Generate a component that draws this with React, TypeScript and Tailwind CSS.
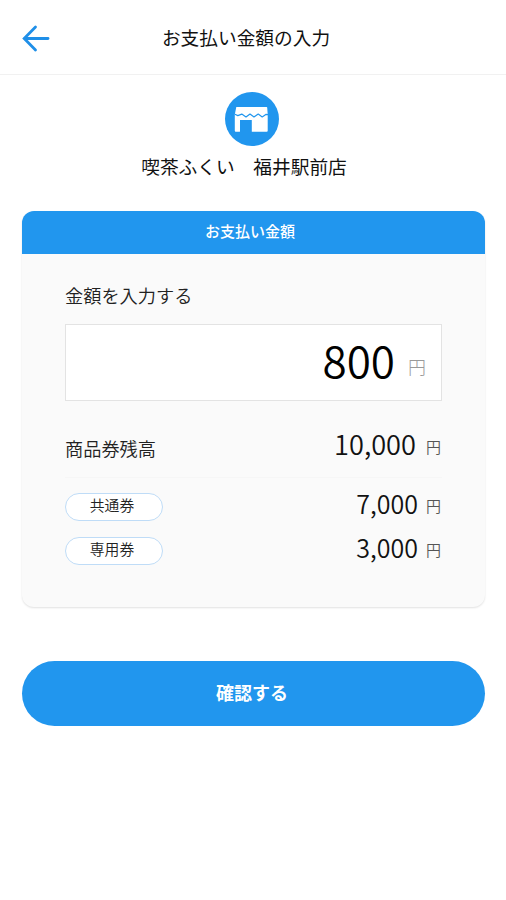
import React, { useState } from 'react';

type Voucher = {
  id: number;
  name: string;
  balance: number;
};

const vouchers: Voucher[] = [
  { id: 1, name: '共通券', balance: 7000 },
  { id: 2, name: '専用券', balance: 3000 },
];

const BackIcon = () => (
  <svg width="28" height="28" viewBox="0 0 28 28" fill="none" stroke="#1f8fe8" strokeWidth="2.8" strokeLinecap="round">
    <path d="M26 14.500H3" />
    <path d="M13.500 3L2.200 14.500 13.500 26" />
  </svg>
);

const ShopIcon = () => (
  <svg width="54" height="54" viewBox="0 0 54 54" fill="none">
    <circle cx="27" cy="27" r="27" fill="#2196ee" />
    <path
      d="M11.300 15H41.600q.5 0 .6.6l.5 7v16.200q0 1-1 1H26.800V28H15v11.200q0 .6-.6.6h-3.700q-.9 0-.9-1V22.600z"
      fill="#fff"
    />
    <path
      d="M10 22.300l2.800 1.300 4-1.500 4.200 2.800 4-2.800 4 2.800 4.200-2.800 4 2.800 3.600-2.500 2.500.2"
      stroke="#2196ee"
      strokeWidth="1.200"
      strokeLinejoin="round"
    />
  </svg>
);

const App = () => {
  const [amount, setAmount] = useState('800');

  const total = vouchers.reduce((sum, voucher) => sum + voucher.balance, 0);

  return (
    <div className="min-h-screen bg-white font-['Noto_Sans_CJK_JP',sans-serif] text-[#111]">
      <header className="flex h-[75px] items-center border-b border-[#f1f1f1] px-[22px]">
        <button className="mt-0.5 w-7" aria-label="戻る">
          <BackIcon />
        </button>
        <h1 className="mr-7 flex-1 pb-px pr-3.5 text-center text-[18.700px] leading-7">お支払い金額の入力</h1>
      </header>

      <div className="flex flex-col items-center pr-[3px] pt-[17px]">
        <ShopIcon />
        <p className="mr-[15px] mt-1.5 text-[18.700px] leading-7">喫茶ふくい　福井駅前店</p>
      </div>

      <section className="ml-[22px] mr-[21px] mt-[31px] h-[396px] rounded-xl bg-[#fafafa] shadow-[0_1px_2px_rgba(0,0,0,0.12)]">
        <h2 className="flex h-[43px] items-center justify-center rounded-t-xl bg-[#2196ee] pb-0.5 pr-[7px] text-[15px] font-medium text-white">
          お支払い金額
        </h2>
        <div className="px-[43px] pt-[27px]">
          <label htmlFor="amount" className="block text-[18.200px] font-[350] leading-7 text-[#222]">
            金額を入力する
          </label>
          <div className="mt-[15px] flex h-[77px] items-baseline border border-[#e3e3e3] bg-white pr-[15px]">
            <input
              id="amount"
              type="text"
              value={amount}
              onChange={(e) => setAmount(e.target.value)}
              className="h-[68px] w-full min-w-0 bg-transparent text-right text-[44px] font-[350] leading-[68px] text-black outline-none"
            />
            <span className="relative -top-1 ml-[13px] text-[18px] font-light text-[#999]">円</span>
          </div>

          <div className="mt-[22px] flex h-[55px] items-start justify-between border-b border-[#f6f6f6]">
            <span className="mt-[11px] text-[18.200px] font-[350] leading-7 text-[#222]">商品券残高</span>
            <p className="pr-px text-[27.200px] font-[350] leading-10">
              {total.toLocaleString('en-US')}
              <span className="relative -top-0.5 ml-2.5 text-[15px] text-[#555]">円</span>
            </p>
          </div>

          <ul className="mt-[5px]">
            {vouchers.map((voucher) => (
              <li key={voucher.id} className="flex h-11 items-center justify-between">
                <span className="mt-1 flex h-7 w-[98px] items-center justify-center rounded-full border border-[#bfdcf7] bg-white pb-[3px] pr-1 text-[14.800px] font-[350] text-[#222]">
                  {voucher.name}
                </span>
                <p className="pr-px text-[25px] font-[350] leading-10">
                  {voucher.balance.toLocaleString('en-US')}
                  <span className="relative -top-0.5 ml-2 text-[15px] text-[#555]">円</span>
                </p>
              </li>
            ))}
          </ul>
        </div>
      </section>

      <div className="pl-[22px] pr-[21px] pt-[54px]">
        <button className="h-[65px] w-full rounded-full bg-[#2196ee] pb-[3px] pr-[3px] text-[18px] font-bold text-white">
          確認する
        </button>
      </div>
    </div>
  );
};

export default App;
